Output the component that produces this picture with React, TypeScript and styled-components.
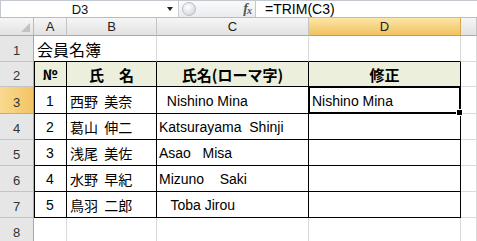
import styled, { createGlobalStyle } from "styled-components";

const GlobalStyle = createGlobalStyle`
  html, body { margin: 0; padding: 0; background: #fff; overflow: hidden; }
  body { font-family: "Liberation Sans", "Noto Sans CJK JP", sans-serif; color: #000; }
`;

const Window = styled.div`
  width: 477px;
  height: 241px;
  overflow: hidden;
  display: flex;
  flex-direction: column;
`;

// formula bar
const FormulaBar = styled.div`
  display: flex;
  height: 20px;
  border-top: 1px solid #c3c8cf;
  border-bottom: 1px solid #b4bcc6;
  background: #fff;
`;

const NameBox = styled.div`
  width: 177px;
  display: flex;
  align-items: center;
  border-left: 1px solid #c3c8cf;
  font-size: 13px;
`;

const NameText = styled.span`
  width: 158px;
  text-align: center;
  color: #111;
`;

const DropArrow = styled.span`
  margin-left: 8px;
  width: 0;
  height: 0;
  border-left: 3px solid transparent;
  border-right: 3px solid transparent;
  border-top: 4px solid #222;
`;

const Splitter = styled.div`
  width: 78px;
  display: flex;
  align-items: center;
  justify-content: space-between;
  padding: 0 4px 0 3px;
  box-sizing: border-box;
  background: linear-gradient(#f9fafb, #e9ebee);
  border-left: 1px solid #c9ced5;
  border-right: 1px solid #c3c8cf;
`;

const Knob = styled.span`
  width: 12px;
  height: 12px;
  border-radius: 50%;
  border: 1px solid #b9bec6;
  background: radial-gradient(circle at 40% 35%, #ffffff, #dfe2e6 60%, #c9cdd3);
`;

const Fx = styled.span`
  font-family: "Liberation Serif", serif;
  font-style: italic;
  font-weight: 700;
  font-size: 14px;
  color: #555;
  letter-spacing: -1px;
  & sub { font-size: 10px; vertical-align: -1px; }
`;

const FormulaInput = styled.div`
  flex: 1;
  display: flex;
  align-items: center;
  padding-left: 9px;
  font-size: 14px;
  white-space: pre;
`;

const Strip = styled.div`
  height: 2px;
  background: #eceff3;
`;

// sheet
const Sheet = styled.div`
  display: grid;
  grid-template-columns: 34px 33px 90px 152px 152px 16px;
  grid-template-rows: 18px 26px 25px 27px 26px 26px 26px 26px 26px;
`;

const Corner = styled.div`
  position: relative;
  background: linear-gradient(#f6f6f6, #e2e2e2);
  border-right: 1px solid #b9b9b9;
  border-bottom: 1px solid #a9a9a9;
  &::after {
    content: "";
    position: absolute;
    right: 3px;
    bottom: 3px;
    border-left: 9px solid transparent;
    border-bottom: 9px solid #c2c2c2;
  }
`;

const ColHead = styled.div<{ $active?: boolean }>`
  display: flex;
  align-items: center;
  justify-content: center;
  font-size: 13px;
  color: #222;
  background: ${(p) =>
    p.$active ? "linear-gradient(#fbe6a8, #f2c25f)" : "linear-gradient(#f6f6f6, #e2e2e2)"};
  border-right: 1px solid ${(p) => (p.$active ? "#d9a64a" : "#c4c4c4")};
  border-bottom: 1px solid ${(p) => (p.$active ? "#d39a33" : "#a9a9a9")};
`;

const RowHead = styled.div<{ $active?: boolean }>`
  display: flex;
  align-items: flex-end;
  justify-content: center;
  padding-bottom: 3px;
  box-sizing: border-box;
  font-size: 13px;
  color: #333;
  background: ${(p) => (p.$active ? "linear-gradient(90deg, #f9d98f, #f3c464)" : "#e6e6e6")};
  border-right: 1px solid ${(p) => (p.$active ? "#d39a33" : "#a9a9a9")};
  border-bottom: 1px solid ${(p) => (p.$active ? "#dca849" : "#c4c4c4")};
`;

type CellProps = {
  $center?: boolean;
  $head?: boolean;
  $frame?: boolean;
  $under?: boolean;
  $edge?: boolean;
  $pad?: number;
  $size?: number;
  $span?: number;
};

const Cell = styled.div<CellProps>`
  position: relative;
  display: flex;
  align-items: flex-end;
  justify-content: ${(p) => (p.$center ? "center" : "flex-start")};
  box-sizing: border-box;
  padding: 0 2px 3px ${(p) => p.$pad ?? 2}px;
  grid-column: ${(p) => (p.$span ? `span ${p.$span}` : "auto")};
  font-size: ${(p) => p.$size ?? 14}px;
  line-height: 17px;
  font-weight: ${(p) => (p.$head ? 700 : 400)};
  white-space: pre;
  background: ${(p) => (p.$head ? "#ebefdc" : "transparent")};
  border-right: 1px solid ${(p) => (p.$frame ? "#000" : "#d9dadb")};
  border-bottom: 1px solid ${(p) => (p.$frame || p.$under ? "#000" : "#d9dadb")};
  box-shadow: ${(p) => (p.$edge ? "inset 1px 0 0 #000" : "none")};
`;

const Kanji = styled.span`
  font-family: "Noto Sans CJK JP", sans-serif;
  word-spacing: 3px;
`;

const Selection = styled.div`
  position: absolute;
  left: -1px;
  top: -1px;
  right: -1px;
  bottom: -1px;
  border: 2px solid #000;
  z-index: 2;
  pointer-events: none;
`;

const FillHandle = styled.div`
  position: absolute;
  right: -4px;
  bottom: -4px;
  width: 5px;
  height: 5px;
  background: #000;
  border: 1px solid #fff;
`;

const members = [
  { no: "1", name: "西野 美奈", roma: "  Nishino Mina", fixed: "Nishino Mina" },
  { no: "2", name: "葛山 伸二", roma: "Katsurayama  Shinji", fixed: "" },
  { no: "3", name: "浅尾 美佐", roma: "Asao   Misa", fixed: "" },
  { no: "4", name: "水野 早紀", roma: "Mizuno    Saki", fixed: "" },
  { no: "5", name: "鳥羽 二郎", roma: "   Toba Jirou", fixed: "" },
];

export default function App() {
  return (
    <Window>
      <GlobalStyle />
      <FormulaBar>
        <NameBox>
          <NameText>D3</NameText>
          <DropArrow />
        </NameBox>
        <Splitter>
          <Knob />
          <Fx>
            f<sub>x</sub>
          </Fx>
        </Splitter>
        <FormulaInput>=TRIM(C3)</FormulaInput>
      </FormulaBar>
      <Strip />

      <Sheet>
        <Corner />
        <ColHead>A</ColHead>
        <ColHead>B</ColHead>
        <ColHead>C</ColHead>
        <ColHead $active>D</ColHead>
        <ColHead />

        <RowHead>1</RowHead>
        <Cell $span={2} $under $pad={3} $size={16}>
          <Kanji>会員名簿</Kanji>
        </Cell>
        <Cell $under />
        <Cell $under />
        <Cell />

        <RowHead>2</RowHead>
        <Cell $head $frame $edge $center>
          <Kanji>№</Kanji>
        </Cell>
        <Cell $head $frame $center $size={15}>
          <Kanji>氏　名</Kanji>
        </Cell>
        <Cell $head $frame $center $size={15}>
          <Kanji>氏名(ローマ字)</Kanji>
        </Cell>
        <Cell $head $frame $center $size={15}>
          <Kanji>修正</Kanji>
        </Cell>
        <Cell />

        {members.map((m, i) => (
          <Row key={m.no} index={i} {...m} />
        ))}

        <RowHead>8</RowHead>
        <Cell />
        <Cell />
        <Cell />
        <Cell />
        <Cell />
      </Sheet>
    </Window>
  );
}

function Row({ index, no, name, roma, fixed }: { index: number; no: string; name: string; roma: string; fixed: string }) {
  const selected = index === 0;
  return (
    <>
      <RowHead $active={selected}>{index + 3}</RowHead>
      <Cell $frame $edge $center>
        {no}
      </Cell>
      <Cell $frame $pad={3}>
        <Kanji>{name}</Kanji>
      </Cell>
      <Cell $frame>{roma}</Cell>
      <Cell $frame $pad={3}>
        {fixed}
        {selected && (
          <Selection>
            <FillHandle />
          </Selection>
        )}
      </Cell>
      <Cell />
    </>
  );
}
